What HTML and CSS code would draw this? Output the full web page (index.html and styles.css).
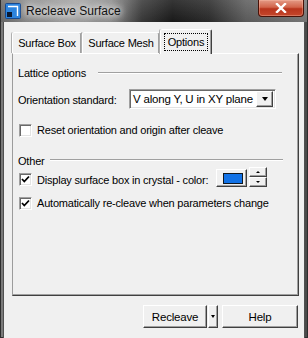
FILE: index.html
```html
<!DOCTYPE html>
<html lang="en">
<head>
    <meta charset="UTF-8">
    <title>Recleave Surface</title>
    <link rel="stylesheet" href="styles.css">
</head>
<body>
    <div class="window">
        <!-- タイトルバー -->
        <div class="titlebar">
            <svg class="app-icon" width="16" height="16" viewBox="0 0 16 16">
                <rect x="0.5" y="0.5" width="15" height="15" rx="1" fill="#2c84de" stroke="#17498f"/>
                <path d="M3 3.5 H12.5 V13" stroke="#ffffff" stroke-width="1.4" fill="none"/>
                <rect x="2" y="9" width="5" height="5" fill="#0b1a33"/>
            </svg>
            <span class="title">Recleave Surface</span>
            <div class="close-btn">
                <svg width="12" height="10" viewBox="0 0 12 10">
                    <path d="M2 1 L10 9 M10 1 L2 9" stroke="#ffffff" stroke-width="2.4" stroke-linecap="square"/>
                </svg>
            </div>
        </div>

        <div class="client">
            <!-- タブ -->
            <div class="tabs">
                <div class="tab tab-box">Surface Box</div>
                <div class="tab tab-mesh">Surface Mesh</div>
                <div class="tab tab-options active"><span class="focus">Options</span></div>
            </div>

            <div class="panel">
                <div class="section lattice">
                    <span class="section-label">Lattice options</span>
                    <span class="rule"></span>
                </div>

                <div class="row orient">
                    <span class="orient-label">Orientation standard:</span>
                    <div class="combo">
                        <span class="combo-text">V along Y, U in XY plane</span>
                        <span class="combo-btn"><i class="arrow-down"></i></span>
                    </div>
                </div>

                <div class="row check-row reset">
                    <span class="checkbox"></span>
                    <span class="check-text">Reset orientation and origin after cleave</span>
                </div>

                <div class="section other">
                    <span class="section-label">Other</span>
                    <span class="rule"></span>
                </div>

                <div class="row display">
                    <div class="display-label">
                        <span class="checkbox">
                            <svg width="9" height="9" viewBox="0 0 9 9"><path d="M1 4 L3.3 6.5 L8 1.5" stroke="#000" stroke-width="1.8" fill="none"/></svg>
                        </span>
                        <span class="check-text">Display surface box in crystal - color:</span>
                    </div>
                    <div class="color-btn"><span class="swatch"></span></div>
                    <div class="spinner">
                        <span class="spin"><i class="arrow-up"></i></span>
                        <span class="spin"><i class="arrow-small-down"></i></span>
                    </div>
                </div>

                <div class="row check-row auto">
                    <span class="checkbox">
                        <svg width="9" height="9" viewBox="0 0 9 9"><path d="M1 4 L3.3 6.5 L8 1.5" stroke="#000" stroke-width="1.8" fill="none"/></svg>
                    </span>
                    <span class="check-text">Automatically re-cleave when parameters change</span>
                </div>
            </div>

            <!-- 下部ボタン -->
            <div class="buttons">
                <div class="btn recleave">Recleave</div>
                <div class="btn split"><i class="arrow-down"></i></div>
                <div class="btn help">Help</div>
            </div>
        </div>
    </div>
</body>
</html>
```

FILE: styles.css
```css
/* 基本 */
body {
    margin: 0;
    padding: 0;
    background-color: #2b2b2b;
    font-family: "Liberation Sans", Arial, sans-serif;
    font-size: 11px;
    letter-spacing: -0.2px;
    color: #000;
}

/* ウィンドウ枠 */
.window {
    width: 308px;
    height: 338px;
    box-sizing: border-box;
    border: 1px solid #2e2e2e;
    border-top: 0;
    padding: 0 2px 2px 2px;
    background: linear-gradient(to right, #7a7a7a, #8c8c8c 30%, #5a5a5a 60%, #4a4a4a 100%);
}

/* タイトルバー */
.titlebar {
    height: 22px;
    margin: 0 -2px;
    padding: 0 0 0 4px;
    display: flex;
    align-items: center;
    background:
        linear-gradient(to bottom, rgba(255, 255, 255, 0.12), rgba(0, 0, 0, 0.05)),
        linear-gradient(to right, #6c6c6c 0%, #8a8a8a 8%, #a4a4a4 24%, #8c8c8c 36%, #3a3a3a 46%, #1a1a1a 56%, #2c2c2c 68%, #5e5e5e 80%, #7a7a7a 100%);
}

.app-icon {
    flex: none;
    margin-top: -1px;
}

.title {
    margin-left: 5px;
    font-size: 12px;
    letter-spacing: 0;
    color: #111;
    text-shadow: 0 0 6px #fff, 0 0 10px rgba(255, 255, 255, 0.9), 0 0 14px rgba(255, 255, 255, 0.7);
}

.close-btn {
    margin-left: auto;
    margin-right: 3px;
    align-self: flex-start;
    width: 46px;
    height: 17px;
    box-sizing: border-box;
    border: 1px solid #4a1208;
    border-top: 0;
    border-radius: 0 0 4px 4px;
    background: linear-gradient(to bottom, #e49a86 0%, #d2644b 45%, #b8341c 55%, #c4472c 100%);
    box-shadow: inset 0 0 0 1px rgba(255, 200, 180, 0.35);
    display: flex;
    align-items: center;
    justify-content: center;
}

/* クライアント領域 */
.client {
    background-color: #f0f0f0;
    border: 1px solid #505050;
    border-top: 0;
    height: 312px;
    padding: 7px 5px 0 8px;
    box-sizing: content-box;
}

/* タブ */
.tabs {
    display: flex;
    align-items: flex-end;
    height: 24px;
}

.tab {
    height: 21px;
    box-sizing: border-box;
    border-top: 1px solid #fff;
    border-left: 1px solid #fff;
    border-right: 1px solid #404040;
    box-shadow: inset -1px 0 0 #a0a0a0, -1px 0 0 #b0b0b0;
    border-radius: 2px 2px 0 0;
    display: flex;
    align-items: center;
    justify-content: center;
    background-color: #f0f0f0;
}

.tab-box {
    width: 70px;
}

.tab-mesh {
    width: 78px;
}

.tab-options {
    width: 52px;
}

.tab.active {
    height: 24px;
    margin-bottom: -1px;
    position: relative;
    z-index: 1;
    height: 25px;
    padding-bottom: 1px;
}

.focus {
    border: 1px dotted #000;
    padding: 2px 3px 2px 3px;
    line-height: 12px;
}

/* パネル */
.panel {
    width: 287px;
    height: 243px;
    box-sizing: border-box;
    border-style: solid;
    border-width: 1px;
    border-color: #fff #404040 #404040 #9c9c9c;
    box-shadow: inset -1px -1px 0 #a0a0a0;
    padding-left: 5px;
    display: flex;
    flex-direction: column;
}

.row {
    display: flex;
    align-items: center;
}

.section {
    display: flex;
    align-items: center;
}

.section-label {
    flex: none;
}

.rule {
    flex: none;
    height: 0;
    border-top: 1px solid #a0a0a0;
    border-bottom: 1px solid #fff;
}

.lattice {
    margin-top: 11px;
    height: 16px;
}

.lattice .section-label {
    width: 80px;
}

.lattice .rule {
    width: 184px;
}

.other {
    margin-top: 17px;
    height: 13px;
}

.other .section-label {
    width: 32px;
}

.other .rule {
    width: 233px;
    margin-top: -2px;
}

/* コンボボックス */
.orient {
    margin-top: 8px;
    height: 20px;
}

.orient-label {
    width: 111px;
    flex: none;
    padding-top: 1px;
}

.combo {
    width: 147px;
    height: 20px;
    box-sizing: border-box;
    border: 1px solid;
    border-color: #a0a0a0 #fff #fff #a0a0a0;
    box-shadow: inset 1px 1px 0 #696969, inset -1px -1px 0 #e3e3e3;
    background-color: #fff;
    display: flex;
    align-items: center;
    padding: 2px;
}

.combo-text {
    flex: 1;
    padding-left: 1px;
    font-size: 11.5px;
}

.combo-btn {
    width: 17px;
    height: 16px;
    box-sizing: border-box;
    border: 1px solid;
    border-color: #fff #404040 #404040 #fff;
    box-shadow: inset -1px -1px 0 #a0a0a0;
    background-color: #f0f0f0;
    display: flex;
    align-items: center;
    justify-content: center;
}

.arrow-down {
    width: 0;
    height: 0;
    border-left: 3.5px solid transparent;
    border-right: 3.5px solid transparent;
    border-top: 4px solid #000;
}

/* チェックボックス */
.check-row {
    padding-left: 1px;
    height: 14px;
}

.reset {
    margin-top: 14px;
}

.auto {
    margin-top: 9px;
}

.checkbox {
    flex: none;
    width: 13px;
    height: 13px;
    box-sizing: border-box;
    border: 1px solid;
    border-color: #a0a0a0 #fff #fff #a0a0a0;
    box-shadow: inset 1px 1px 0 #696969, inset -1px -1px 0 #e3e3e3;
    background-color: #fff;
    display: flex;
    align-items: center;
    justify-content: center;
}

.check-text {
    margin-left: 5px;
}

.display {
    height: 20px;
    align-items: flex-start;
}

.display-label {
    width: 198px;
    padding-left: 1px;
    box-sizing: border-box;
    display: flex;
    align-items: center;
    margin-top: 6px;
}

.color-btn {
    width: 31px;
    height: 18px;
    margin-top: 2px;
    box-sizing: border-box;
    border: 1px solid;
    border-color: #fff #404040 #404040 #fff;
    box-shadow: inset -1px -1px 0 #a0a0a0;
    display: flex;
    align-items: center;
    padding-left: 6px;
}

.swatch {
    width: 20px;
    height: 11px;
    box-sizing: border-box;
    border: 1px solid #101820;
    background-color: #1272e6;
}

.spinner {
    width: 18px;
    height: 20px;
    margin-left: 2px;
    display: flex;
    flex-direction: column;
}

.spin {
    height: 10px;
    box-sizing: border-box;
    border: 1px solid;
    border-color: #fff #404040 #404040 #fff;
    box-shadow: inset -1px -1px 0 #a0a0a0;
    display: flex;
    align-items: center;
    justify-content: center;
}

.arrow-up {
    width: 0;
    height: 0;
    border-left: 2px solid transparent;
    border-right: 2px solid transparent;
    border-bottom: 2px solid #000;
}

.arrow-small-down {
    width: 0;
    height: 0;
    border-left: 2px solid transparent;
    border-right: 2px solid transparent;
    border-top: 2px solid #000;
}

/* 下部ボタン */
.buttons {
    display: flex;
    justify-content: flex-end;
    margin-top: 9px;
    padding-right: 1px;
}

.btn {
    height: 23px;
    box-sizing: border-box;
    border: 1px solid;
    border-color: #fff #404040 #404040 #fff;
    box-shadow: inset -1px -1px 0 #a0a0a0;
    background-color: #f0f0f0;
    display: flex;
    align-items: center;
    justify-content: center;
    font-size: 11.5px;
}

.recleave {
    width: 64px;
}

.split {
    width: 10px;
    margin-left: 1px;
}

.split .arrow-down {
    border-left-width: 2.5px;
    border-right-width: 2.5px;
    border-top-width: 3px;
}

.help {
    width: 76px;
    margin-left: 4px;
}
```
